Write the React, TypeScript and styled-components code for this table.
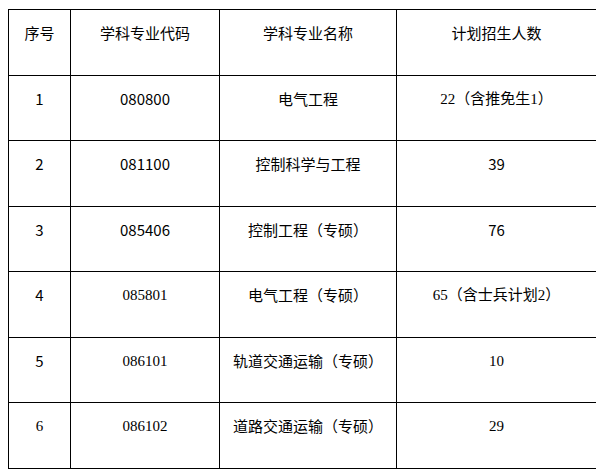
import React from 'react';
import styled, { createGlobalStyle } from 'styled-components';

const GlobalStyle = createGlobalStyle`
  body {
    margin: 8px;
    margin-top: 9px;
    background: #fff;
    color: #000;
  }
`;

type Font = 'sans' | 'serif';

const rows: { no: string; noFont: Font; code: string; codeFont: Font; name: string; plan: string; planFont: Font }[] = [
  { no: '1', noFont: 'sans', code: '080800', codeFont: 'sans', name: '电气工程', plan: '22（含推免生1）', planFont: 'serif' },
  { no: '2', noFont: 'sans', code: '081100', codeFont: 'sans', name: '控制科学与工程', plan: '39', planFont: 'sans' },
  { no: '3', noFont: 'sans', code: '085406', codeFont: 'sans', name: '控制工程（专硕）', plan: '76', planFont: 'sans' },
  { no: '4', noFont: 'sans', code: '085801', codeFont: 'serif', name: '电气工程（专硕）', plan: '65（含士兵计划2）', planFont: 'serif' },
  { no: '5', noFont: 'sans', code: '086101', codeFont: 'serif', name: '轨道交通运输（专硕）', plan: '10', planFont: 'serif' },
  { no: '6', noFont: 'serif', code: '086102', codeFont: 'serif', name: '道路交通运输（专硕）', plan: '29', planFont: 'serif' },
];

const App = () => {
  return (
    <>
      <GlobalStyle />
      <Table>
        <colgroup>
          <col style={{ width: 62 }} />
          <col style={{ width: 149 }} />
          <col style={{ width: 177 }} />
          <col style={{ width: 200 }} />
        </colgroup>
        <thead>
          <Row $tall>
            <HeadCell>序号</HeadCell>
            <HeadCell>学科专业代码</HeadCell>
            <HeadCell>学科专业名称</HeadCell>
            <HeadCell>计划招生人数</HeadCell>
          </Row>
        </thead>
        <tbody>
          {rows.map((r, i) => (
            <Row key={r.code} $tall={i % 2 === 1}>
              <Cell $font={r.noFont}>{r.no}</Cell>
              <Cell $font={r.codeFont}>{r.code}</Cell>
              <Cell $font="sans">{r.name}</Cell>
              <Cell $font={r.planFont}>{r.plan}</Cell>
            </Row>
          ))}
        </tbody>
      </Table>
    </>
  );
};

export default App;

const Table = styled.table`
  width: 588px;
  border-collapse: collapse;
  table-layout: fixed;
`;

const Row = styled.tr<{ $tall?: boolean }>`
  height: ${(p) => (p.$tall ? 66 : 65)}px;
`;

const HeadCell = styled.th`
  border: 1px solid #000;
  padding: 12px 4px 0;
  vertical-align: top;
  text-align: center;
  font-weight: normal;
  font-size: 15px;
  line-height: 22px;
  font-family: 'Noto Sans CJK SC', sans-serif;
`;

const Cell = styled.td<{ $font: Font }>`
  border: 1px solid #000;
  padding: 12px 4px 0;
  vertical-align: top;
  text-align: center;
  font-size: 15px;
  line-height: 22px;
  font-family: ${(p) =>
    p.$font === 'serif'
      ? "'Liberation Serif', 'Noto Sans CJK SC', serif"
      : "'Noto Sans CJK SC', 'Liberation Sans', sans-serif"};
`;
